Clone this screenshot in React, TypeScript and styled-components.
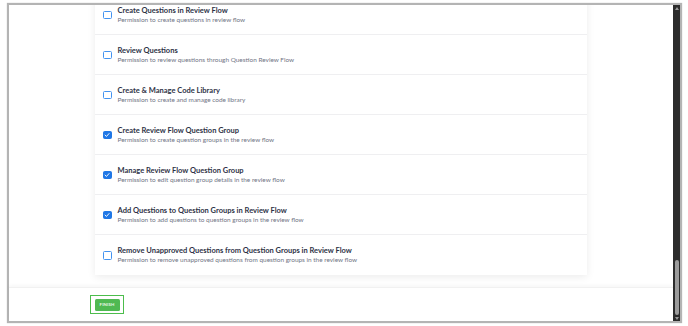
import React from "react";
import styled, { createGlobalStyle } from "styled-components";

const Global = createGlobalStyle`
  html, body { margin: 0; padding: 0; background: #ffffff; }
  body { width: 688px; height: 326px; overflow: hidden; font-family: "Lato", "Noto Sans", sans-serif; }
  * { box-sizing: border-box; }
`;

const Page = styled.div`
  width: 688px;
  height: 326px;
  padding: 3px 6px 3px 7px;
  background: #ffffff;
`;

const Frame = styled.div`
  width: 675px;
  height: 320px;
  border: 2px solid #b4b4b4;
  box-shadow: 0 0 1px rgba(0, 0, 0, 0.25);
  display: flex;
  background: #ffffff;
`;

const Content = styled.div`
  flex: 1;
  display: flex;
  flex-direction: column;
  min-width: 0;
`;

const ScrollArea = styled.div`
  flex: 1;
  overflow: hidden;
  padding-left: 86px;
`;

const Card = styled.div`
  width: 492px;
  margin-top: -10px;
  background: #ffffff;
  box-shadow: 0 2px 8px rgba(0, 0, 0, 0.08);
`;

const Row = styled.div`
  height: 40px;
  display: flex;
  align-items: center;
  gap: 6px;
  padding: 0 8px;
  border-bottom: 1px solid #efeff1;
  &:last-child { border-bottom: none; }
`;

const Box = styled.div<{ $checked: boolean }>`
  width: 8.5px;
  height: 8.5px;
  flex: none;
  border-radius: 1.5px;
  border: 1.2px solid ${(p) => (p.$checked ? "#1f77e6" : "#4393f0")};
  background: ${(p) => (p.$checked ? "#1f77e6" : "#ffffff")};
  display: flex;
  align-items: center;
  justify-content: center;
  margin-top: 1px;
`;

const Texts = styled.div`
  display: flex;
  flex-direction: column;
  gap: 1px;
  margin-top: 0;
`;

const Title = styled.div`
  font-size: 7.5px;
  font-weight: 700;
  color: #2e3246;
  line-height: 9px;
  white-space: nowrap;
`;

const Desc = styled.div`
  font-size: 6.45px;
  color: #717585;
  line-height: 8px;
  white-space: nowrap;
`;

const Footer = styled.div`
  height: 34px;
  flex: none;
  border-top: 1px solid #f1f1f1;
  box-shadow: 0 -2px 3px rgba(0, 0, 0, 0.03);
  padding: 7px 0 0 81px;
`;

const Highlight = styled.div`
  width: 34px;
  height: 19px;
  border: 1.5px solid #4cbd4c;
  display: flex;
  align-items: center;
  justify-content: center;
`;

const FinishButton = styled.button`
  width: 25px;
  height: 12px;
  padding: 0;
  border: none;
  border-radius: 1.5px;
  background: #4fb952;
  color: #e8f7e8;
  font-family: "Lato", sans-serif;
  font-size: 4.4px;
  font-weight: 700;
  letter-spacing: 0.1px;
`;

const Scrollbar = styled.div`
  width: 7px;
  flex: none;
  background: #2c2c2c;
  display: flex;
  flex-direction: column;
  align-items: center;
  justify-content: space-between;
  padding: 2px 0 1px;
`;

const Arrow = styled.div<{ $down?: boolean }>`
  width: 0;
  height: 0;
  border-left: 2.5px solid transparent;
  border-right: 2.5px solid transparent;
  ${(p) =>
    p.$down
      ? "border-top: 3px solid #9a9a9a;"
      : "border-bottom: 3px solid #9a9a9a;"}
`;

const Track = styled.div`
  flex: 1;
  width: 100%;
  display: flex;
  flex-direction: column;
  justify-content: flex-end;
  align-items: center;
  padding: 2px 0;
`;

const Thumb = styled.div`
  width: 4px;
  height: 55px;
  border-radius: 2px;
  background: #9c9c9c;
`;

const Check = () => (
  <svg width="6" height="6" viewBox="0 0 10 10">
    <path d="M1.8 5.2 L4.1 7.4 L8.4 2.6" fill="none" stroke="#ffffff" strokeWidth="1.6" strokeLinecap="round" strokeLinejoin="round" />
  </svg>
);

const items = [
  { t: "Create Questions in Review Flow", d: "Permission to create questions in review flow", c: false },
  { t: "Review Questions", d: "Permission to review questions through Question Review Flow", c: false },
  { t: "Create & Manage Code Library", d: "Permission to create and manage code library", c: false },
  { t: "Create Review Flow Question Group", d: "Permission to create question groups in the review flow", c: true },
  { t: "Manage Review Flow Question Group", d: "Permission to edit question group details in the review flow", c: true },
  { t: "Add Questions to Question Groups in Review Flow", d: "Permission to add questions to question groups in the review flow", c: true },
  { t: "Remove Unapproved Questions from Question Groups in Review Flow", d: "Permission to remove unapproved questions from question groups in the review flow", c: false },
];

export default function App() {
  return (
    <>
      <Global />
      <Page>
        <Frame>
          <Content>
            <ScrollArea>
              <Card>
                {items.map((it) => (
                  <Row key={it.t}>
                    <Box $checked={it.c}>{it.c && <Check />}</Box>
                    <Texts>
                      <Title>{it.t}</Title>
                      <Desc>{it.d}</Desc>
                    </Texts>
                  </Row>
                ))}
              </Card>
            </ScrollArea>
            <Footer>
              <Highlight>
                <FinishButton>FINISH</FinishButton>
              </Highlight>
            </Footer>
          </Content>
          <Scrollbar>
            <Arrow />
            <Track>
              <Thumb />
            </Track>
            <Arrow $down />
          </Scrollbar>
        </Frame>
      </Page>
    </>
  );
}
